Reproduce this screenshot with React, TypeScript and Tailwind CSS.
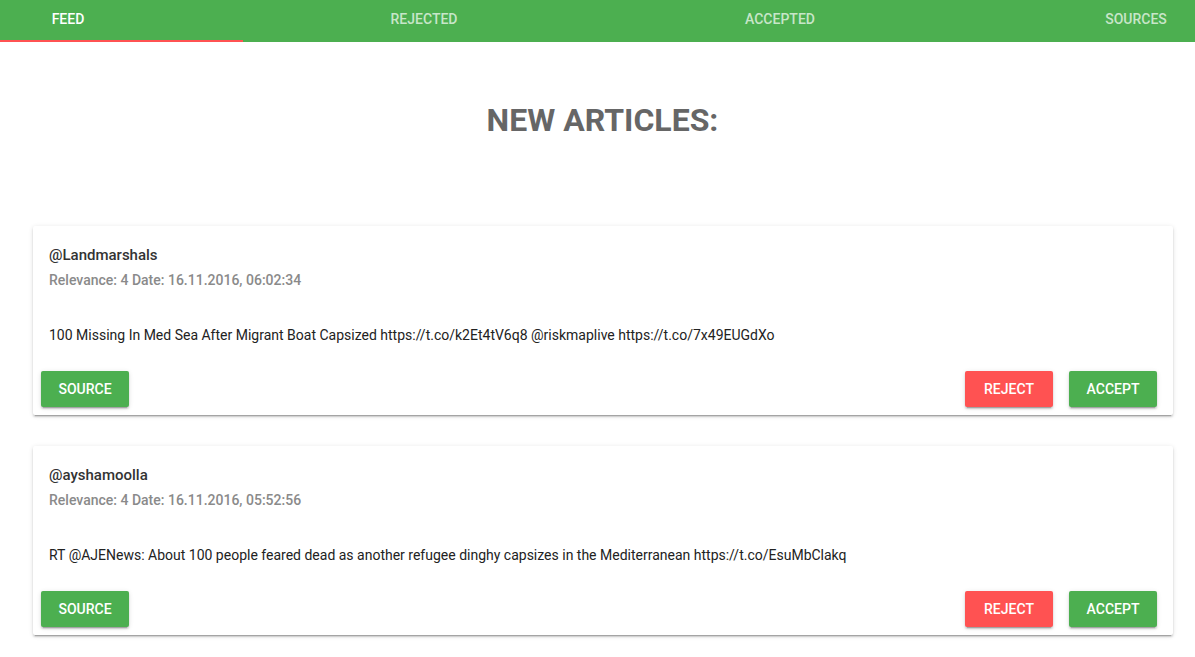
import React from 'react';

const tabs = ['Feed', 'Rejected', 'Accepted', 'Sources'];

const articles = [
    {
        user: '@Landmarshals',
        relevance: 4,
        date: '16.11.2016, 06:02:34',
        text: '100 Missing In Med Sea After Migrant Boat Capsized https://t.co/k2Et4tV6q8 @riskmaplive https://t.co/7x49EUGdXo',
    },
    {
        user: '@ayshamoolla',
        relevance: 4,
        date: '16.11.2016, 05:52:56',
        text: 'RT @AJENews: About 100 people feared dead as another refugee dinghy capsizes in the Mediterranean https://t.co/EsuMbClakq',
    },
];

function Btn({ label, color }: { label: string; color: string }) {
    return (
        <button
            className={`h-9 w-[88px] rounded-[2px] text-[14px] font-medium uppercase text-white shadow-[0_2px_2px_0_rgba(0,0,0,0.14),0_1px_5px_0_rgba(0,0,0,0.12),0_3px_1px_-2px_rgba(0,0,0,0.2)] ${color}`}
        >
            {label}
        </button>
    );
}

export default function App() {
    return (
        <div className="min-h-screen bg-white font-['Roboto',sans-serif]">
            {/* tabs */}
            <nav className="relative h-[42px] overflow-hidden bg-[#4caf50]">
                <div className="-ml-[110px] grid h-[40px] w-[1424px] grid-cols-4">
                    {tabs.map((tab, i) => (
                        <div
                            key={tab}
                            className={`flex items-center justify-center pb-[2px] text-[14px] font-medium uppercase ${i === 0 ? 'text-white' : 'text-white/70'}`}
                        >
                            {tab}
                        </div>
                    ))}
                </div>
                <div className="absolute bottom-0 left-0 h-[2px] w-[243px] bg-[#ff5252]" />
            </nav>

            <h1 className="mt-[58px] pl-[10px] text-center text-[32px] font-bold leading-[40px] text-[#666]">NEW ARTICLES:</h1>

            <div className="mt-[86px] flex flex-col gap-[31px] px-[33px] pr-[22px]">
                {articles.map((a) => (
                    <div
                        key={a.user}
                        className="rounded-[2px] bg-white shadow-[0_2px_2px_0_rgba(0,0,0,0.14),0_1px_5px_0_rgba(0,0,0,0.12),0_3px_1px_-2px_rgba(0,0,0,0.2)]"
                    >
                        <div className="px-4 pt-[19px]">
                            <div className="text-[15px] font-medium leading-5 text-[#333]">{a.user}</div>
                            <div className="mt-[5px] text-[14px] font-medium leading-5 text-[#8a8a8a]">
                                Relevance: {a.relevance} Date: {a.date}
                            </div>
                            <p className="mt-[35px] text-[14px] leading-5 text-[#222]">{a.text}</p>
                        </div>
                        <div className="flex items-center justify-between pb-2 pl-2 pr-4 pt-[26px]">
                            <Btn label="Source" color="bg-[#4caf50]" />
                            <div className="flex gap-4">
                                <Btn label="Reject" color="bg-[#ff5252]" />
                                <Btn label="Accept" color="bg-[#4caf50]" />
                            </div>
                        </div>
                    </div>
                ))}
            </div>
        </div>
    );
}
